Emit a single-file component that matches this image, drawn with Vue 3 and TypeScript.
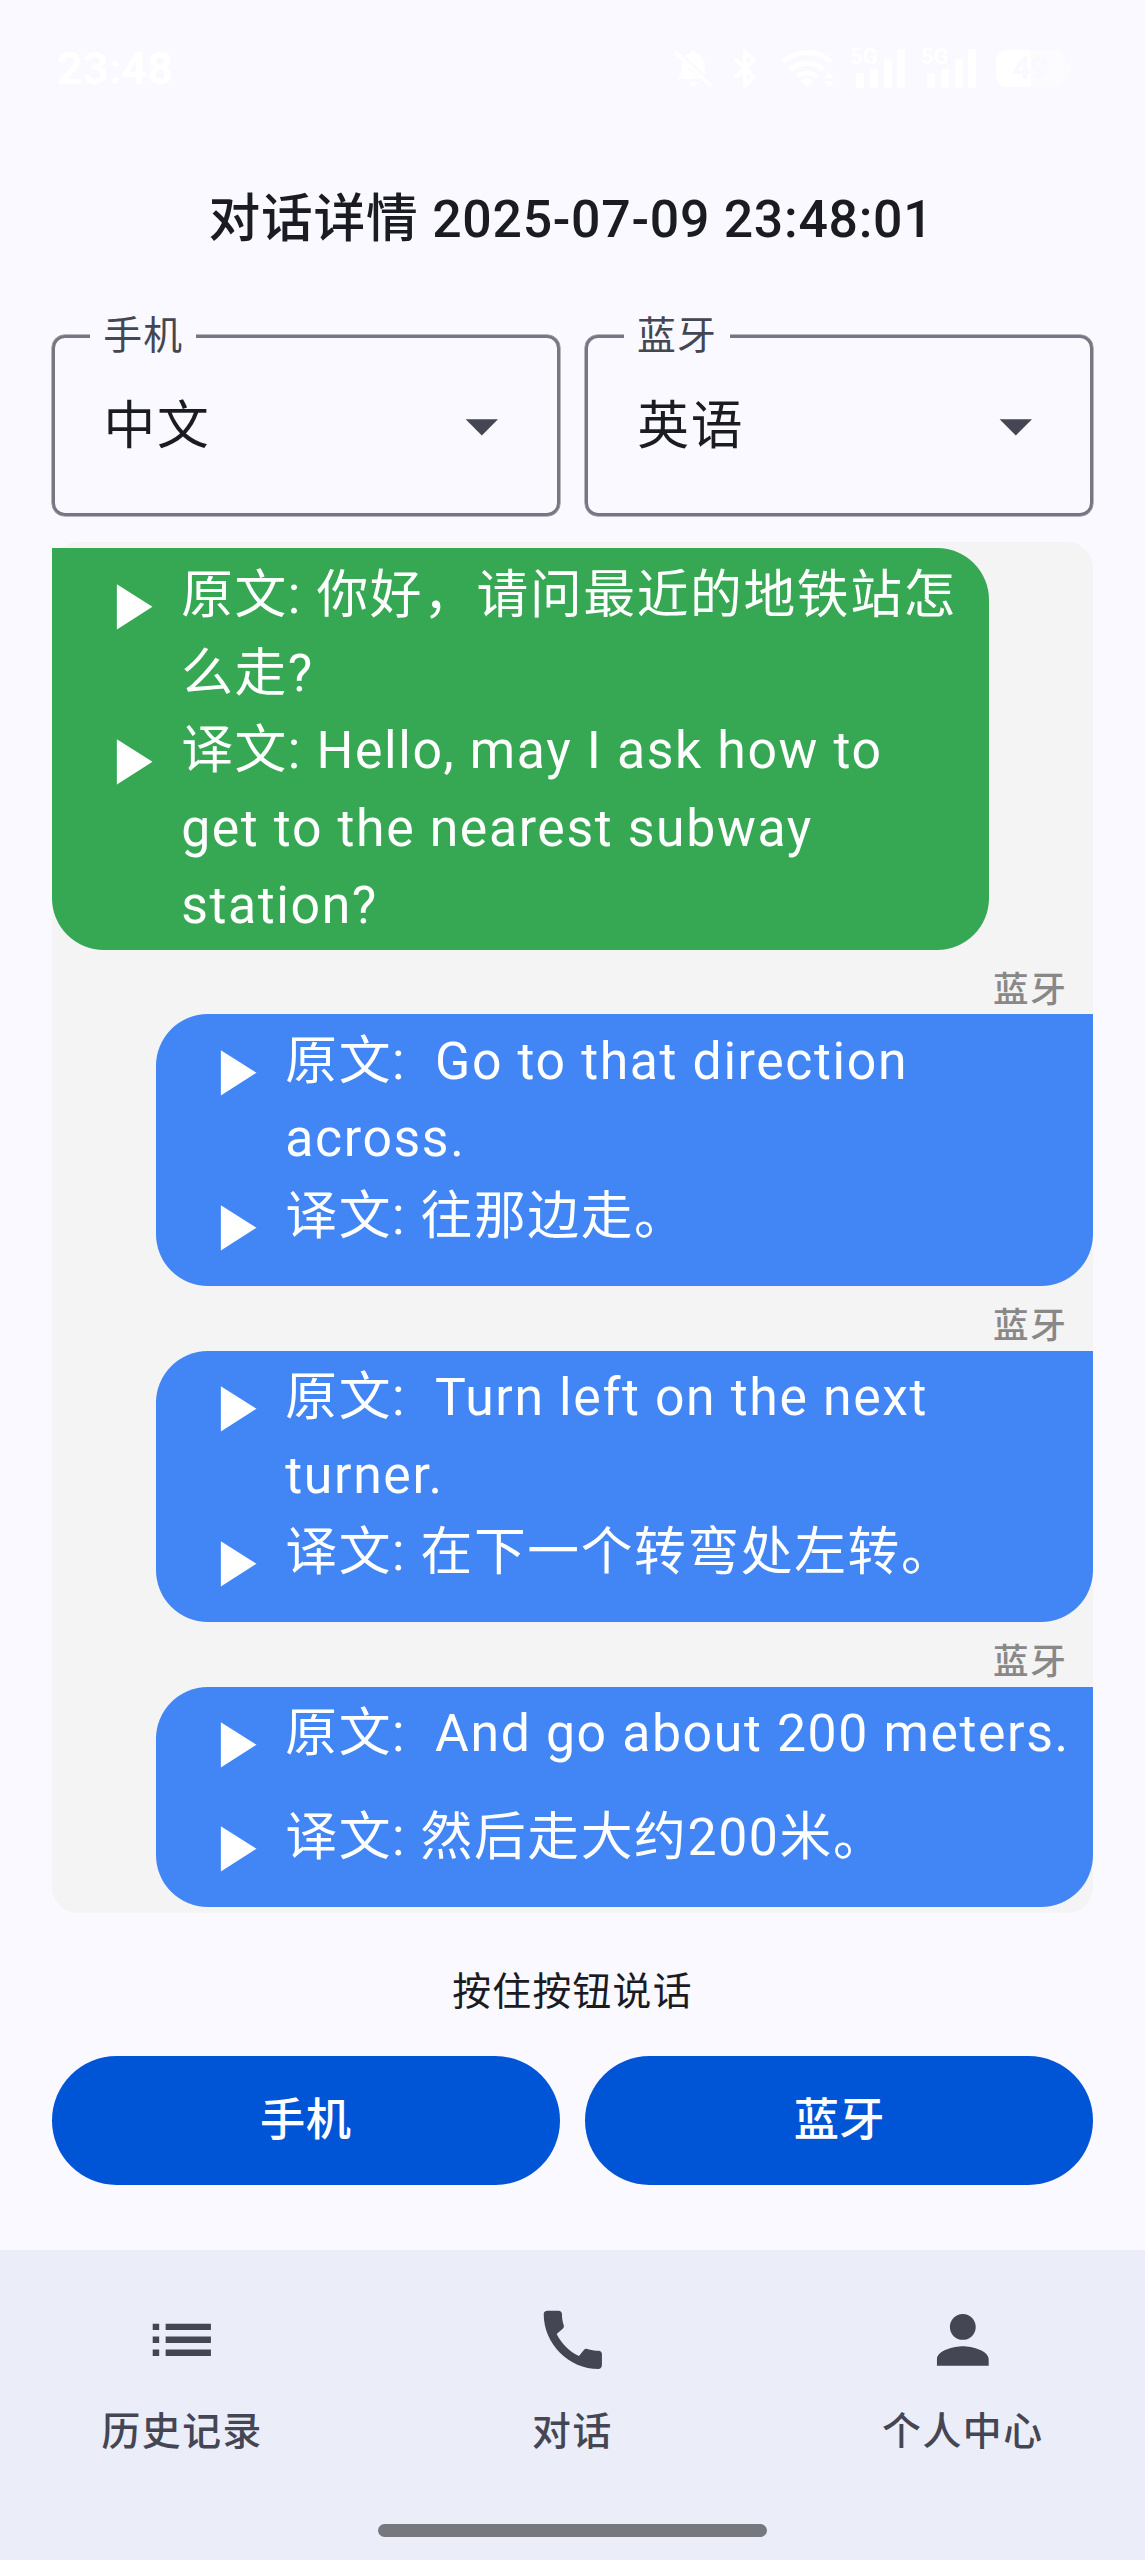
<script setup lang="ts">
interface Message {
  side: 'phone' | 'bluetooth'
  speaker?: string
  lines: string[]
}

interface LanguageField {
  label: string
  value: string
}

interface NavItem {
  label: string
  icon: string
}

const fields: LanguageField[] = [
  { label: '手机', value: '中文' },
  { label: '蓝牙', value: '英语' },
]

const messages: Message[] = [
  {
    side: 'phone',
    lines: [
      '原文: 你好，请问最近的地铁站怎么走?',
      '译文: Hello, may I ask how to get to the nearest subway station?',
    ],
  },
  {
    side: 'bluetooth',
    speaker: '蓝牙',
    lines: ['原文:  Go to that direction across.', '译文: 往那边走。'],
  },
  {
    side: 'bluetooth',
    speaker: '蓝牙',
    lines: ['原文:  Turn left on the next turner.', '译文: 在下一个转弯处左转。'],
  },
  {
    side: 'bluetooth',
    speaker: '蓝牙',
    lines: ['原文:  And go about 200 meters.', '译文: 然后走大约200米。'],
  },
]

const talkButtons: string[] = ['手机', '蓝牙']

const navItems: NavItem[] = [
  {
    label: '历史记录',
    icon: 'M3 13h2v-2H3v2zm0 4h2v-2H3v2zm0-8h2V7H3v2zm4 4h14v-2H7v2zm0 4h14v-2H7v2zM7 7v2h14V7H7z',
  },
  {
    label: '对话',
    icon: 'M20.01 15.38c-1.23 0-2.42-.2-3.53-.56a.977.977 0 0 0-1.01.24l-1.57 1.97c-2.83-1.35-5.48-3.9-6.89-6.83l1.95-1.66c.27-.28.35-.67.24-1.02-.37-1.11-.56-2.3-.56-3.53 0-.54-.45-.99-.99-.99H4.19C3.65 3 3 3.24 3 3.99 3 13.28 10.73 21 20.01 21c.71 0 .99-.63.99-1.18v-3.45c0-.54-.45-.99-.99-.99z',
  },
  {
    label: '个人中心',
    icon: 'M12 12c2.21 0 4-1.79 4-4s-1.79-4-4-4-4 1.79-4 4 1.79 4 4 4zm0 2c-2.67 0-8 1.34-8 4v2h16v-2c0-2.66-5.33-4-8-4z',
  },
]
</script>

<template>
  <div class="screen">
    <header class="status">
      <span class="clock">23:48</span>
      <div class="status-icons">
        <svg class="bell" viewBox="0 0 38 38" width="38" height="38">
          <path d="M11 6c2-1.500 3-2 5-2.500a3 3 0 0 1 6 0c6 2 9 6 9 12v9.500z" />
          <path d="M7.500 11.500L25 29H3l4.500-6z" />
          <path d="M15 32h8a4 4 0 0 1-8 0z" />
          <path d="M1 2l36 34" class="stroke" />
        </svg>
        <svg class="bt" viewBox="0 0 24 39" width="24" height="39">
          <path d="M2 10l19 18-9 9V2l9 9L2 29" class="stroke" />
        </svg>
        <svg class="wifi" viewBox="0 0 56 39" width="56" height="39">
          <path d="M2 13a35 35 0 0 1 48 0" class="stroke wide" />
          <path d="M9 21a25 25 0 0 1 34 0" class="stroke wide" />
          <path d="M16 28a15 15 0 0 1 20 0" class="stroke wide" />
          <path d="M26 38l-6-7q6-4 12 0z" />
          <path d="M43 29l5-6 5 6zM43 32h10l-5 6z" />
        </svg>
        <div v-for="n in 2" :key="n" class="signal">
          <span class="gen">5G</span>
          <svg viewBox="0 0 50 39" width="50" height="39">
            <path d="M0 24h8v15H0zM14 20h8v19h-8zM28 10h8v29h-8zM41 0h8v39h-8z" />
          </svg>
        </div>
        <div class="battery"><span>49</span></div>
        <i class="battery-tip"></i>
      </div>
    </header>

    <h1 class="title">对话详情 2025-07-09 23:48:01</h1>

    <section class="fields">
      <div v-for="field in fields" :key="field.label" class="field">
        <span class="field-label">{{ field.label }}</span>
        <span class="field-value">{{ field.value }}</span>
        <svg class="caret" viewBox="0 0 24 24"><path d="M7 10l5 5 5-5z" /></svg>
      </div>
    </section>

    <main class="chat">
      <article v-for="(message, i) in messages" :key="i" :class="['message', message.side]">
        <span v-if="message.speaker" class="speaker">{{ message.speaker }}</span>
        <div class="bubble">
          <div v-for="line in message.lines" :key="line" class="row">
            <svg class="play" viewBox="0 0 24 24"><path d="M8 5v14l11-7z" /></svg>
            <p class="text">{{ line }}</p>
          </div>
        </div>
      </article>
    </main>

    <p class="hint">按住按钮说话</p>

    <section class="talk">
      <button v-for="label in talkButtons" :key="label" type="button">{{ label }}</button>
    </section>

    <nav class="nav">
      <div class="nav-items">
        <a v-for="item in navItems" :key="item.label" class="nav-item">
          <svg viewBox="0 0 24 24"><path :d="item.icon" /></svg>
          <span>{{ item.label }}</span>
        </a>
      </div>
      <div class="home-bar"></div>
    </nav>
  </div>
</template>

<style>
body {
  margin: 0;
  background: #f9f9ff;
}
</style>

<style scoped>
.screen {
  --dp: 3.2345px;
  box-sizing: border-box;
  width: 1145px;
  height: 2560px;
  overflow: hidden;
  display: flex;
  flex-direction: column;
  background: #f9f9ff;
  color: #1a1b23;
  font-family: Roboto, 'Noto Sans CJK SC', sans-serif;
}

svg {
  display: block;
  flex: none;
  fill: currentColor;
}

/* status bar */
.status {
  height: 137px;
  flex: none;
  display: flex;
  align-items: center;
  padding: 0 74px 0 57px;
  color: #fff;
}

.clock {
  flex: 1;
  font-size: 45px;
  font-weight: 700;
}

.status-icons {
  display: flex;
  align-items: center;
}

.stroke {
  fill: none;
  stroke: currentColor;
  stroke-width: 4;
}

.wide {
  stroke-width: 5;
}

.bt {
  margin-left: 21px;
}

.wifi {
  margin-left: 24px;
}

.signal {
  display: flex;
  position: relative;
  margin-left: 19px;
}

.signal + .signal {
  margin-left: 21px;
}

.gen {
  position: absolute;
  left: -6px;
  top: -3px;
  font-size: 22px;
  line-height: 22px;
  font-weight: 700;
}

.battery {
  width: 69px;
  height: 37px;
  margin-left: 19px;
  border-radius: 10px;
  background: linear-gradient(90deg, #fff 51%, #fcfbfe 51%);
  color: #f9f9ff;
  font-size: 32px;
  line-height: 37px;
  font-weight: 700;
  text-align: center;
}

.battery-tip {
  width: 5px;
  height: 12px;
  margin-left: 1px;
  border-radius: 0 5px 5px 0;
  background: #fcfbfe;
}

/* heading */
.title {
  box-sizing: border-box;
  flex: none;
  height: 162px;
  margin: 0 3px 0 0;
  padding-top: 2px;
  font-size: calc(var(--dp) * 16);
  line-height: 162px;
  font-weight: 500;
  letter-spacing: calc(var(--dp) * 0.23);
  text-align: center;
}

/* language selectors */
.fields {
  flex: none;
  display: flex;
  gap: calc(var(--dp) * 8);
  padding: 36px calc(var(--dp) * 16) 0;
}

.field {
  position: relative;
  box-sizing: border-box;
  flex: 1;
  height: calc(var(--dp) * 56);
  display: flex;
  align-items: center;
  justify-content: space-between;
  padding: 0 calc(var(--dp) * 11) 0 calc(var(--dp) * 15.1);
  border: 3px solid #767782;
  border-radius: calc(var(--dp) * 4);
  box-shadow: 0 0 0 0.5px #767782;
}

.field-label {
  position: absolute;
  left: calc(var(--dp) * 11);
  top: -28px;
  padding: 0 calc(var(--dp) * 4);
  background: #f9f9ff;
  color: #444653;
  font-size: calc(var(--dp) * 12);
  line-height: calc(var(--dp) * 16);
  letter-spacing: calc(var(--dp) * 0.4);
}

.field-value {
  padding-top: 3px;
  font-size: calc(var(--dp) * 16);
  line-height: calc(var(--dp) * 24);
  letter-spacing: calc(var(--dp) * 0.5);
}

.caret {
  width: calc(var(--dp) * 24);
  height: calc(var(--dp) * 24);
  color: #444653;
}

/* conversation */
.chat {
  flex: none;
  margin: calc(var(--dp) * 8) calc(var(--dp) * 16) 0;
  padding: calc(var(--dp) * 2) 0;
  border-radius: calc(var(--dp) * 8);
  background: #f4f4f4;
}

.message {
  display: flex;
  flex-direction: column;
  align-items: flex-start;
}

.bluetooth {
  align-items: flex-end;
}

.speaker {
  margin: 0 calc(var(--dp) * 8);
  padding-top: calc(var(--dp) * 5);
  color: #888;
  font-size: calc(var(--dp) * 11);
  line-height: calc(var(--dp) * 15);
  font-weight: 500;
  letter-spacing: calc(var(--dp) * 0.5);
}

.bubble {
  box-sizing: border-box;
  width: 90%;
  padding: calc(var(--dp) * 2) calc(var(--dp) * 6) calc(var(--dp) * 2) calc(var(--dp) * 12);
  border-radius: 0 calc(var(--dp) * 16) calc(var(--dp) * 16);
  background: #36a853;
  color: #fff;
}

.bluetooth .bubble {
  border-radius: calc(var(--dp) * 16) 0 calc(var(--dp) * 16) calc(var(--dp) * 16);
  background: #4286f5;
}

.row {
  display: flex;
  align-items: flex-start;
  gap: calc(var(--dp) * 4);
  min-height: calc(var(--dp) * 32);
}

.play {
  width: calc(var(--dp) * 24);
  height: calc(var(--dp) * 24);
  margin-top: calc(var(--dp) * 4);
}

.text {
  flex: 1;
  margin: 0 0 -2px;
  padding-top: 2px;
  font-size: calc(var(--dp) * 16);
  line-height: calc(var(--dp) * 24);
  letter-spacing: calc(var(--dp) * 0.5);
  white-space: pre-wrap;
}

/* push-to-talk */
.hint {
  flex: none;
  margin: calc(var(--dp) * 16.4) 0 calc(var(--dp) * 11.6);
  font-size: calc(var(--dp) * 12);
  line-height: calc(var(--dp) * 16);
  letter-spacing: calc(var(--dp) * 0.4);
  text-align: center;
}

.talk {
  flex: none;
  display: flex;
  gap: calc(var(--dp) * 8);
  padding: 0 calc(var(--dp) * 16);
}

.talk button {
  flex: 1;
  height: calc(var(--dp) * 40);
  padding: 2px 0 0;
  border: 0;
  border-radius: calc(var(--dp) * 20);
  background: #0055d7;
  color: #fff;
  font-family: inherit;
  font-size: calc(var(--dp) * 14);
  line-height: calc(var(--dp) * 20);
  font-weight: 500;
  letter-spacing: calc(var(--dp) * 0.1);
}

/* bottom navigation */
.nav {
  flex: 1;
  display: flex;
  flex-direction: column;
  justify-content: space-between;
  align-items: center;
  margin-top: calc(var(--dp) * 20);
  background: #ebedf9;
  color: #444654;
}

.nav-items {
  display: flex;
  align-self: stretch;
  gap: calc(var(--dp) * 8);
  padding-top: calc(var(--dp) * 16);
}

.nav-item {
  flex: 1;
  display: flex;
  flex-direction: column;
  align-items: center;
  gap: calc(var(--dp) * 8.4);
  font-size: calc(var(--dp) * 12);
  line-height: calc(var(--dp) * 16);
  font-weight: 500;
  letter-spacing: calc(var(--dp) * 0.5);
}

.nav-item svg {
  width: calc(var(--dp) * 24);
  height: calc(var(--dp) * 24);
}

.home-bar {
  width: 389px;
  height: 13px;
  margin-bottom: 23px;
  border-radius: 7px;
  background: #77787d;
}
</style>
